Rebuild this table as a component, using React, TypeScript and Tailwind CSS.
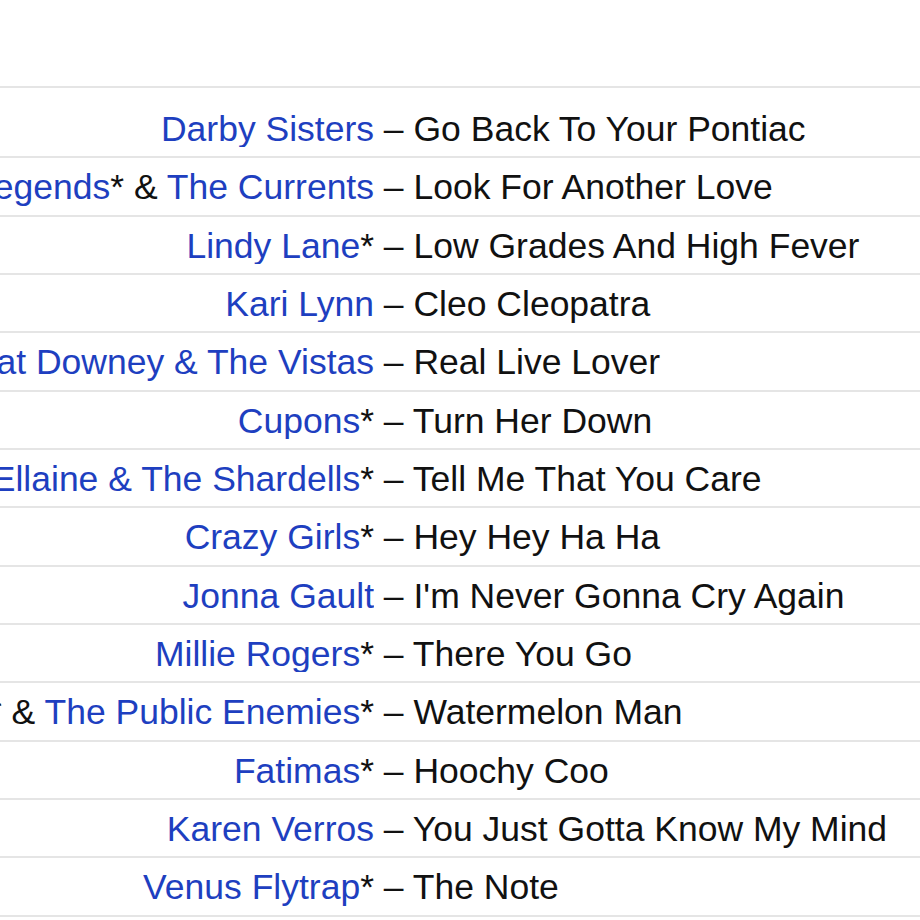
type Part = { text: string; link?: boolean };

interface Track {
  artist: Part[];
  title: string;
}

const TRACKS: Track[] = [
  { artist: [{ text: 'Darby Sisters', link: true }], title: 'Go Back To Your Pontiac' },
  {
    artist: [
      { text: 'The Legends', link: true },
      { text: '* & ' },
      { text: 'The Currents', link: true },
    ],
    title: 'Look For Another Love',
  },
  { artist: [{ text: 'Lindy Lane', link: true }, { text: '*' }], title: 'Low Grades And High Fever' },
  { artist: [{ text: 'Kari Lynn', link: true }], title: 'Cleo Cleopatra' },
  { artist: [{ text: 'Pat Downey & The Vistas', link: true }], title: 'Real Live Lover' },
  { artist: [{ text: 'Cupons', link: true }, { text: '*' }], title: 'Turn Her Down' },
  { artist: [{ text: 'Ellaine & The Shardells', link: true }, { text: '*' }], title: 'Tell Me That You Care' },
  { artist: [{ text: 'Crazy Girls', link: true }, { text: '*' }], title: 'Hey Hey Ha Ha' },
  { artist: [{ text: 'Jonna Gault', link: true }], title: "I'm Never Gonna Cry Again" },
  { artist: [{ text: 'Millie Rogers', link: true }, { text: '*' }], title: 'There You Go' },
  {
    artist: [
      { text: 'Jerry Wright', link: true },
      { text: '* & ' },
      { text: 'The Public Enemies', link: true },
      { text: '*' },
    ],
    title: 'Watermelon Man',
  },
  { artist: [{ text: 'Fatimas', link: true }, { text: '*' }], title: 'Hoochy Coo' },
  { artist: [{ text: 'Karen Verros', link: true }], title: 'You Just Gotta Know My Mind' },
  { artist: [{ text: 'Venus Flytrap', link: true }, { text: '*' }], title: 'The Note' },
];

function TrackRow({ track }: { track: Track }) {
  return (
    <div className="flex h-[58.33px] items-center border-b-2 border-[#e5e5e5] pt-[3px] whitespace-nowrap">
      <div className="flex w-[374px] shrink-0 justify-end overflow-hidden">
        <span className="shrink-0">
          {track.artist.map((part, i) =>
            part.link ? (
              <a key={i} href="#" className="text-[#1e3fc0]">
                {part.text}
              </a>
            ) : (
              <span key={i}>{part.text}</span>
            )
          )}
        </span>
      </div>
      <span className="shrink-0">&nbsp;– {track.title}</span>
    </div>
  );
}

export default function App() {
  return (
    <div className="h-[920px] w-[920px] overflow-hidden bg-white font-['Liberation_Sans',Arial,sans-serif] text-[35.5px] leading-none text-[#111]">
      <div className="h-[86px]" />
      <div className="border-t-2 border-[#e5e5e5] pt-[12px]">
        {TRACKS.map((track) => (
          <TrackRow key={track.title} track={track} />
        ))}
      </div>
    </div>
  );
}
